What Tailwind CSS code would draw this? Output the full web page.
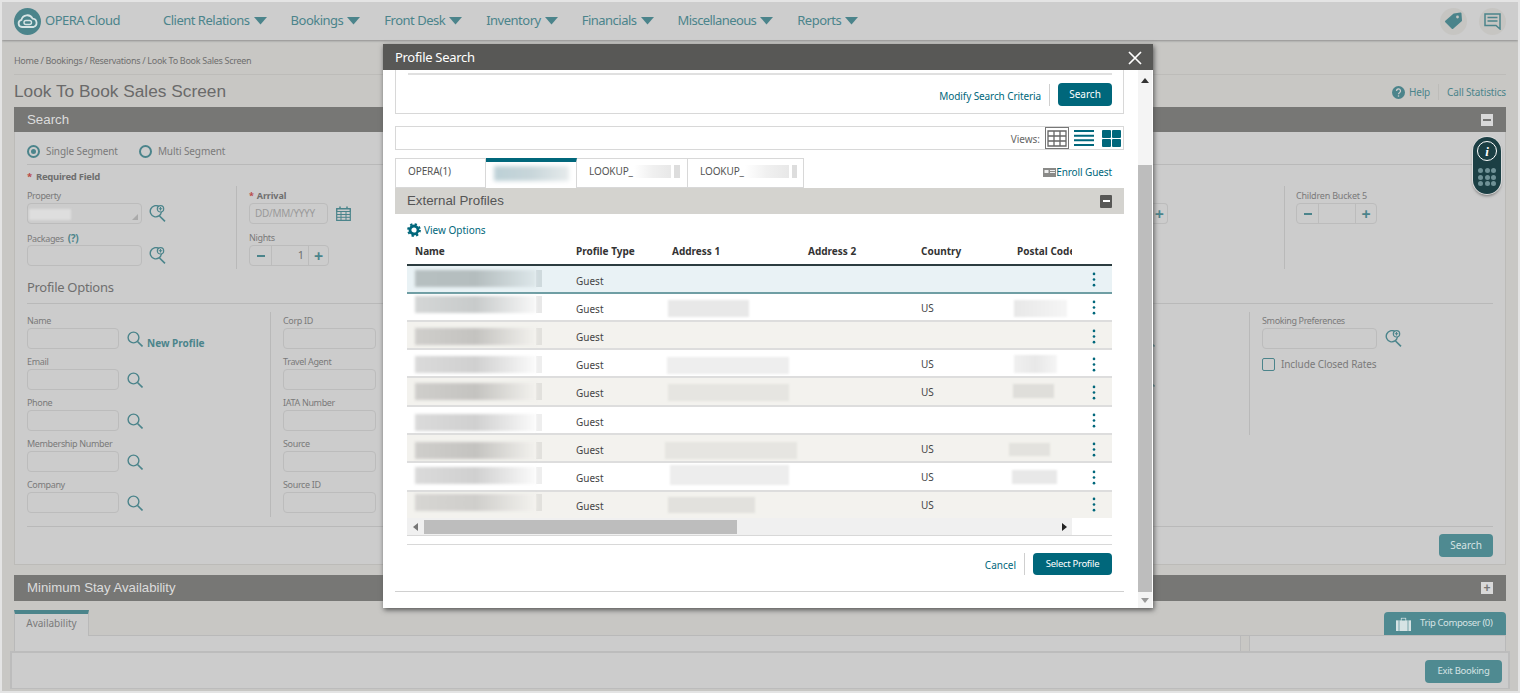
<!DOCTYPE html>
<html lang="en">
<head>
<meta charset="utf-8">
<title>Look To Book Sales Screen</title>
<script src="https://cdn.jsdelivr.net/npm/@tailwindcss/browser@4"></script>
</head>
<body class="bg-[#e6e6e6]">
<svg class="hidden" aria-hidden="true">
  <symbol id="mag" viewBox="0 0 16 16"><circle cx="6.5" cy="6.5" r="5.4" fill="none" stroke="currentColor" stroke-width="1.4"/><path d="M10.5 10.5L15.5 15.5" stroke="currentColor" stroke-width="1.6"/></symbol>
  <symbol id="magplus" viewBox="0 0 17 17"><path d="M10 1.6A5.6 5.6 0 1 0 12.4 7" fill="none" stroke="currentColor" stroke-width="1.4"/><circle cx="11.5" cy="3.8" r="3.2" fill="none" stroke="currentColor" stroke-width="1.2"/><path d="M11.5 2v3.6M9.7 3.8h3.6" stroke="currentColor" stroke-width="1.1"/><path d="M10.5 11L16 16.4" stroke="currentColor" stroke-width="1.6"/></symbol>
  <symbol id="kebab" viewBox="0 0 4 16"><circle cx="2" cy="2" r="1.4" fill="currentColor"/><circle cx="2" cy="8" r="1.4" fill="currentColor"/><circle cx="2" cy="14" r="1.4" fill="currentColor"/></symbol>
  <symbol id="caret" viewBox="0 0 13 8"><path d="M0 0H13L6.5 7.5Z" fill="currentColor"/></symbol>
</svg>

<div class="relative w-[1520px] h-[693px] overflow-hidden border-2 border-[#e4e4e4] bg-[#c8c7c4] font-['Noto_Sans'] text-[#7a7a7a]">

  <!-- top navigation -->
  <header class="flex items-center h-[38px] pl-[12px] pr-[12px] bg-[#cdcdcd] shadow-[0_1px_2px_#8f8f8f] text-[#4b848b] text-[13px] tracking-[-0.5px]">
    <svg class="w-[27px] h-[27px]" viewBox="0 0 27 27"><circle cx="13.5" cy="13.5" r="13.5" fill="#4b848b"/><path d="M8 19a3.6 3.6 0 0 1-.6-7.1A6 6 0 0 1 18.6 10.6 4.3 4.3 0 0 1 19.5 19Z" fill="none" stroke="#d8e4e5" stroke-width="1.8"/><rect x="10" y="12.5" width="7.5" height="4" rx="2" fill="none" stroke="#d8e4e5" stroke-width="1.4"/></svg>
    <span class="ml-[4px] w-[118px]">OPERA Cloud</span>
    <nav class="flex items-center gap-[24px]">
      <a class="flex items-center gap-[4px]">Client Relations<svg class="w-[13px] h-[8px]"><use href="#caret"/></svg></a>
      <a class="flex items-center gap-[4px]">Bookings<svg class="w-[13px] h-[8px]"><use href="#caret"/></svg></a>
      <a class="flex items-center gap-[4px]">Front Desk<svg class="w-[13px] h-[8px]"><use href="#caret"/></svg></a>
      <a class="flex items-center gap-[4px]">Inventory<svg class="w-[13px] h-[8px]"><use href="#caret"/></svg></a>
      <a class="flex items-center gap-[4px]">Financials<svg class="w-[13px] h-[8px]"><use href="#caret"/></svg></a>
      <a class="flex items-center gap-[4px] tracking-[-0.6px]">Miscellaneous<svg class="w-[13px] h-[8px]"><use href="#caret"/></svg></a>
      <a class="flex items-center gap-[4px]">Reports<svg class="w-[13px] h-[8px]"><use href="#caret"/></svg></a>
    </nav>
    <div class="ml-auto flex items-center gap-[12px]">
      <span class="flex items-center justify-center w-[27px] h-[27px] rounded-full bg-[#c6c5c2]">
        <svg class="w-[19px] h-[18px]" viewBox="0 0 19 18"><path d="M10 2.500L16.500 1.500L17 8.500L8.500 16L2 9.500Z" fill="#4b848b" stroke="#4b848b" stroke-width="2" stroke-linejoin="round"/><circle cx="13.500" cy="5" r="1.400" fill="#c6c5c2"/></svg>
      </span>
      <span class="flex items-center justify-center w-[27px] h-[27px] rounded-full bg-[#c6c5c2]">
        <svg class="w-[17px] h-[17px]" viewBox="0 0 17 17"><path d="M1 1H16V16L12 12.500H1Z" fill="none" stroke="#4b848b" stroke-width="1.500"/><path d="M3.500 4.600H13.500M3.500 8H13.500" stroke="#4b848b" stroke-width="1.500"/></svg>
      </span>
    </div>
  </header>

  <main class="px-[12px]">
    <div class="h-[35px] pt-[14px] border-b border-[#bdbcb9] text-[9px] tracking-[-0.3px] leading-[13px] text-[#6f6f6f]">Home / Bookings / Reservations / Look To Book Sales Screen</div>
    <div class="flex items-center justify-between h-[32px]">
      <h1 class="font-['Liberation_Sans'] text-[17.3px] pt-[2px] text-[#6a6a6a]">Look To Book Sales Screen</h1>
      <div class="flex items-center text-[10px] tracking-[-0.15px] text-[#4b848b] pt-[2px]">
        <svg class="w-[13px] h-[13px]" viewBox="0 0 13 13"><circle cx="6.5" cy="6.5" r="6.5" fill="#4b848b"/><path d="M4.5 5a2 2 0 1 1 3 1.7c-.7.4-1 .8-1 1.5" fill="none" stroke="#ccc" stroke-width="1.3"/><circle cx="6.5" cy="10" r=".8" fill="#ccc"/></svg>
        <span class="ml-[4px] mr-[8px]">Help</span>
        <span class="h-[16px] border-l border-[#bdbcb9] mr-[8px]"></span>
        <span>Call Statistics</span>
      </div>
    </div>

    <!-- search panel -->
    <section>
      <div class="flex items-center justify-between h-[25px] bg-[#777775] pl-[13px] pr-[13px] font-['Liberation_Sans'] text-[13.3px] text-[#dcdcdc]">
        <span>Search</span>
        <span class="flex items-center justify-center w-[12px] h-[12px] bg-[#d9d9d9]"><span class="w-[8px] h-[2px] bg-[#777775]"></span></span>
      </div>
      <div class="h-[433px] border border-t-0 border-[#bcbbb8] bg-[#cccccc] px-[12px]">
        <div class="flex items-center h-[33px] pt-[6px] border-b border-[#b9b9b9] text-[10px] tracking-[-0.1px]">
          <span class="flex items-center justify-center w-[13px] h-[13px] rounded-full border-2 border-[#4b848b]"><span class="w-[5px] h-[5px] rounded-full bg-[#4b848b]"></span></span>
          <span class="ml-[6px]">Single Segment</span>
          <span class="ml-[21px] w-[13px] h-[13px] rounded-full border-2 border-[#4b848b]"></span>
          <span class="ml-[6px]">Multi Segment</span>
        </div>
        <div class="h-[21px] pt-[5px] text-[9.5px] tracking-[-0.25px] leading-[14px] font-bold text-[#6f6f6f]"><span class="text-[#b94a48] mr-[4px]">*</span>Required Field</div>

        <div class="flex h-[83px]">
          <div class="w-[209px]">
            <div class="h-[17px] pt-[3px] text-[9px] tracking-[-0.35px] leading-[14px]">Property</div>
            <div class="flex items-center">
              <div class="relative w-[115px] h-[21px] rounded-[4px] border border-[#bcbcbc]">
                <span class="absolute left-[1px] top-[5px] w-[42px] h-[11px] bg-[#dedede] blur-[1px]"></span>
                <span class="absolute right-[3px] bottom-[3px] w-0 h-0 border-l-[6px] border-b-[6px] border-l-transparent border-b-[#aaaaaa]"></span>
              </div>
              <svg class="ml-[7px] w-[17px] h-[17px] text-[#4b848b]"><use href="#magplus"/></svg>
            </div>
            <div class="h-[21px] pt-[7px] text-[9px] tracking-[-0.35px] leading-[14px]">Packages <b class="ml-[2px] text-[10px] text-[#4b848b]">(?)</b></div>
            <div class="flex items-center">
              <div class="w-[115px] h-[21px] rounded-[4px] border border-[#bcbcbc]"></div>
              <svg class="ml-[7px] w-[17px] h-[17px] text-[#4b848b]"><use href="#magplus"/></svg>
            </div>
          </div>
          <div class="w-[200px] border-l border-[#b9b9b9] pl-[12px]">
            <div class="h-[17px] pt-[3px] text-[9px] tracking-[-0.1px] leading-[14px] font-bold text-[#6f6f6f]"><span class="text-[#b94a48] mr-[3px]">*</span>Arrival</div>
            <div class="flex items-center">
              <div class="flex items-center w-[79px] h-[21px] rounded-[4px] border border-[#bcbcbc] pl-[5px] text-[10px] tracking-[-0.3px] text-[#9a9a9a]">DD/MM/YYYY</div>
              <svg class="ml-[8px] w-[15px] h-[15px]" viewBox="0 0 15 15"><path d="M.7 2.5H14.3V14.3H.7Z" fill="none" stroke="#4b848b" stroke-width="1.2"/><path d="M.7 3H14.3V5.5H.7ZM5 5.5V14M10 5.5V14M1 8.5H14M1 11.3H14" fill="none" stroke="#4b848b"/><path d="M4 .5V3M11 .5V3" stroke="#4b848b" stroke-width="1.5"/></svg>
            </div>
            <div class="h-[21px] pt-[7px] text-[9px] tracking-[-0.35px] leading-[14px]">Nights</div>
            <div class="flex w-[80px] h-[21px] rounded-[4px] border border-[#bcbcbc] text-[#4b848b] text-[11px]">
              <span class="flex items-center justify-center w-[22px] border-r border-[#bcbcbc]"><span class="w-[8px] h-[2px] bg-[#4b848b]"></span></span>
              <span class="flex items-center justify-end w-[36px] pr-[4px] text-[#6f6f6f]">1</span>
              <span class="flex items-center justify-center flex-1 border-l border-[#bcbcbc] text-[16px] font-bold leading-none">+</span>
            </div>
          </div>
          <div class="flex-1 flex justify-end pt-[17px] pr-[116px]">
            <span class="flex items-center justify-end w-[30px] h-[21px] rounded-r-[4px] border border-l-0 border-[#bcbcbc] pr-[3px] text-[16px] font-bold leading-none text-[#4b848b]">+</span>
          </div>
          <div class="w-[209px] border-l border-[#b9b9b9] pl-[11px]">
            <div class="h-[17px] pt-[3px] text-[9px] tracking-[-0.2px] leading-[14px]">Children Bucket 5</div>
            <div class="flex w-[81px] h-[21px] rounded-[4px] border border-[#bcbcbc]">
              <span class="flex items-center justify-center w-[22px] border-r border-[#bcbcbc]"><span class="w-[8px] h-[2px] bg-[#4b848b]"></span></span>
              <span class="w-[36px]"></span>
              <span class="flex items-center justify-center flex-1 border-l border-[#bcbcbc] text-[16px] font-bold leading-none text-[#4b848b]">+</span>
            </div>
          </div>
        </div>

        <div class="h-[35px] pt-[9px] border-b border-[#b9b9b9] text-[13px] tracking-[-0.3px] leading-[19px] text-[#6f6f6f]">Profile Options</div>

        <div class="flex mt-[8px] h-[205px] text-[9px] tracking-[-0.35px] leading-[14px]">
          <div class="w-[243px] shrink-0">
            <div class="h-[37px] flex flex-col justify-end">
              <div>Name</div>
              <div class="flex items-end h-[21px]"><div class="w-[92px] h-[21px] rounded-[4px] border border-[#bcbcbc]"></div><svg class="ml-[8px] mb-[2px] w-[16px] h-[16px] text-[#4b848b]"><use href="#mag"/></svg><b class="ml-[4px] text-[10px] tracking-normal leading-[12px] text-[#4b848b]">New Profile</b></div>
            </div>
            <div class="h-[41px] flex flex-col justify-end">
              <div>Email</div>
              <div class="flex items-center h-[21px]"><div class="w-[92px] h-[21px] rounded-[4px] border border-[#bcbcbc]"></div><svg class="ml-[8px] w-[16px] h-[16px] text-[#4b848b]"><use href="#mag"/></svg></div>
            </div>
            <div class="h-[41px] flex flex-col justify-end">
              <div>Phone</div>
              <div class="flex items-center h-[21px]"><div class="w-[92px] h-[21px] rounded-[4px] border border-[#bcbcbc]"></div><svg class="ml-[8px] w-[16px] h-[16px] text-[#4b848b]"><use href="#mag"/></svg></div>
            </div>
            <div class="h-[41px] flex flex-col justify-end">
              <div>Membership Number</div>
              <div class="flex items-center h-[21px]"><div class="w-[92px] h-[21px] rounded-[4px] border border-[#bcbcbc]"></div><svg class="ml-[8px] w-[16px] h-[16px] text-[#4b848b]"><use href="#mag"/></svg></div>
            </div>
            <div class="h-[41px] flex flex-col justify-end">
              <div>Company</div>
              <div class="flex items-center h-[21px]"><div class="w-[92px] h-[21px] rounded-[4px] border border-[#bcbcbc]"></div><svg class="ml-[8px] w-[16px] h-[16px] text-[#4b848b]"><use href="#mag"/></svg></div>
            </div>
          </div>
          <div class="w-[200px] shrink-0 border-l border-[#b9b9b9] pl-[12px]">
            <div class="h-[37px] flex flex-col justify-end"><div>Corp ID</div><div class="w-[93px] h-[21px] rounded-[4px] border border-[#bcbcbc]"></div></div>
            <div class="h-[41px] flex flex-col justify-end"><div>Travel Agent</div><div class="w-[93px] h-[21px] rounded-[4px] border border-[#bcbcbc]"></div></div>
            <div class="h-[41px] flex flex-col justify-end"><div>IATA Number</div><div class="w-[93px] h-[21px] rounded-[4px] border border-[#bcbcbc]"></div></div>
            <div class="h-[41px] flex flex-col justify-end"><div>Source</div><div class="w-[93px] h-[21px] rounded-[4px] border border-[#bcbcbc]"></div></div>
            <div class="h-[41px] flex flex-col justify-end"><div>Source ID</div><div class="w-[93px] h-[21px] rounded-[4px] border border-[#bcbcbc]"></div></div>
          </div>
          <div class="flex-1 flex flex-col items-end pt-[16px] pr-[94px] text-[#4b848b]">
            <svg class="mt-[3px] w-[16px] h-[16px]"><use href="#mag"/></svg>
            <svg class="mt-[24px] w-[16px] h-[16px]"><use href="#mag"/></svg>
          </div>
          <div class="w-[244px] shrink-0 h-[123px] border-l border-[#b9b9b9] pl-[12px]">
            <div class="h-[37px] flex flex-col justify-end">
              <div>Smoking Preferences</div>
              <div class="flex items-center h-[21px]"><div class="w-[115px] h-[21px] rounded-[4px] border border-[#bcbcbc]"></div><svg class="ml-[8px] w-[17px] h-[17px] text-[#4b848b]"><use href="#magplus"/></svg></div>
            </div>
            <div class="flex items-center mt-[8px] text-[10px] tracking-[-0.1px]"><span class="w-[13px] h-[13px] rounded-[2px] border-[1.5px] border-[#4b848b]"></span><span class="ml-[6px]">Include Closed Rates</span></div>
          </div>
        </div>

        <div class="h-[10px] border-b border-[#b9b9b9]"></div>
        <div class="flex justify-end mt-[7px]">
          <button class="w-[54px] h-[23px] rounded-[4px] bg-[#4f8a91] text-[10px] text-[#d6e3e4]">Search</button>
        </div>
      </div>
    </section>

    <!-- minimum stay -->
    <div class="flex items-center justify-between mt-[10px] h-[26px] bg-[#777775] pl-[13px] pr-[13px] font-['Liberation_Sans'] text-[13.2px] text-[#dcdcdc]">
      <span>Minimum Stay Availability</span>
      <span class="flex items-center justify-center w-[12px] h-[12px] bg-[#d9d9d9] text-[#777775] text-[12px] leading-none font-bold">+</span>
    </div>
    <div class="flex items-end justify-between h-[35px] border-b border-[#b9b9b9]">
      <div class="flex items-center justify-center w-[75px] h-[26px] pb-[3px] -mb-[1px] border-t-4 border-r border-l border-t-[#4b848b] border-x-[#b9b9b9] bg-[#cccccc] text-[10px]">Availability</div>
      <div class="flex items-center w-[122px] h-[23px] rounded-t-[4px] bg-[#4f8a91] pl-[12px] text-[9.5px] tracking-[-0.4px] text-[#d6e3e4]">
        <svg class="w-[15px] h-[14px] mr-[9px]" viewBox="0 0 15 14"><path d="M0 3.5H2.5V14H0ZM3.5 3.5H11.500V14H3.500ZM12.500 3.500H15V14H12.500ZM5 3.500V1H10V3.500" fill="#d6e3e4" stroke="#d6e3e4" stroke-width=".3"/><path d="M5.600 3.500V1.600H9.400V3.500" fill="#4f8a91"/></svg>
        Trip Composer (0)
      </div>
    </div>
    <div class="flex h-[30px]">
      <div class="w-[1227px] bg-[#cccccc] border-x border-[#b9b9b9]"></div>
      <div class="ml-[8px] flex-1 bg-[#cccccc] border-x border-[#b9b9b9]"></div>
    </div>
  </main>

  <!-- sticky footer -->
  <footer class="absolute left-[8px] right-[8px] bottom-[2px] flex items-center justify-end h-[38px] pt-[2px] pr-[6px] bg-[#cccccc] border-2 border-b-[1px] border-[#bcbcbc]">
    <button class="w-[77px] h-[23px] rounded-[4px] bg-[#4f8a91] text-[9.5px] tracking-[-0.3px] text-[#d6e3e4]">Exit Booking</button>
  </footer>

  <!-- floating pill -->
  <div class="absolute left-[1471px] top-[135px] flex flex-col items-center w-[28px] h-[57px] pt-[4px] rounded-full bg-[#1b3f44] shadow-[0_0_0_1px_#dcdcdc,0_2px_3px_#777]">
    <span class="flex items-center justify-center w-[20px] h-[20px] rounded-full border-[1.5px] border-white font-['Liberation_Serif'] italic font-bold text-[13px] leading-none text-white">i</span>
    <div class="grid grid-cols-3 gap-[1.500px] mt-[7px]">
      <span class="w-[5px] h-[5px] rounded-full bg-[#6f9196]"></span><span class="w-[5px] h-[5px] rounded-full bg-[#6f9196]"></span><span class="w-[5px] h-[5px] rounded-full bg-[#6f9196]"></span>
      <span class="w-[5px] h-[5px] rounded-full bg-[#6f9196]"></span><span class="w-[5px] h-[5px] rounded-full bg-[#6f9196]"></span><span class="w-[5px] h-[5px] rounded-full bg-[#6f9196]"></span>
      <span class="w-[5px] h-[5px] rounded-full bg-[#6f9196]"></span><span class="w-[5px] h-[5px] rounded-full bg-[#6f9196]"></span><span class="w-[5px] h-[5px] rounded-full bg-[#6f9196]"></span>
    </div>
  </div>

  <!-- modal -->
  <div role="dialog" class="absolute left-[381px] top-[42px] flex flex-col w-[770px] h-[564px] bg-white shadow-[1px_2px_5px_#555]">
    <div class="flex items-center justify-between h-[26px] bg-[#585856] pl-[12px] pr-[11px] pt-[2px] text-[13px] tracking-[-0.3px] text-white shrink-0">
      <span>Profile Search</span>
      <svg class="w-[14px] h-[14px]" viewBox="0 0 14 14"><path d="M1 1L13 13M13 1L1 13" stroke="#fff" stroke-width="1.700"/></svg>
    </div>
    <div class="flex flex-1 min-h-0">
      <div class="w-[755px] pl-[12px] pr-[14px] text-[#444]">
        <!-- criteria box -->
        <div class="h-[44px] border-x border-b border-[#d8d8d8] pl-[12px] pr-[11px] pt-[3px]">
          <div class="border-t-2 border-[#e0e0e0]"></div>
          <div class="flex items-center justify-end mt-[8px] text-[#00677b]">
            <span class="text-[10px] tracking-[-0.1px] pt-[3px]">Modify Search Criteria</span>
            <span class="h-[22px] ml-[8px] mr-[8px] border-l border-[#cfcfcf]"></span>
            <button class="w-[54px] h-[23px] rounded-[4px] bg-[#00677b] text-[10px] text-white">Search</button>
          </div>
        </div>
        <!-- views -->
        <div class="flex items-center justify-end h-[24px] mt-[12px] border border-[#d8d8d8] pr-[2px] text-[10px] text-[#666]">
          <span class="pt-[3px]">Views:</span>
          <span class="ml-[5px] flex items-center justify-center w-[24px] h-[22px] border border-[#777]">
            <svg class="w-[20px] h-[17px]" viewBox="0 0 20 17"><path d="M1 1H19V16H1ZM1 6H19M1 11H19M7 1V16M13 1V16" fill="none" stroke="#666" stroke-width="1.300"/></svg>
          </span>
          <svg class="ml-[5px] w-[20px] h-[16px]" viewBox="0 0 20 16"><path d="M0 1H20M0 5.700H20M0 10.300H20M0 15H20" stroke="#00677b" stroke-width="2"/></svg>
          <svg class="ml-[8px] w-[19px] h-[17px]" viewBox="0 0 19 17"><rect width="9" height="8" rx="1" fill="#00677b"/><rect x="10" width="9" height="8" rx="1" fill="#00677b"/><rect y="9" width="9" height="8" rx="1" fill="#00677b"/><rect x="10" y="9" width="9" height="8" rx="1" fill="#00677b"/></svg>
        </div>
        <!-- tabs -->
        <div class="flex items-end justify-between h-[30px] mt-[8px] text-[10px] tracking-[-0.1px] text-[#555]">
          <div class="flex h-[30px]">
            <div class="flex items-center w-[91px] pl-[12px] pb-[4px] border border-[#d8d8d8]">OPERA(1)</div>
            <div class="relative flex items-center w-[91px] border-r border-b-0 border-t-4 border-t-[#00677b] border-r-[#d8d8d8] pl-[8px] pb-[4px]"><span class="w-[75px] h-[15px] bg-linear-to-r from-[#bcd0d6] via-[#c8d6da] to-[#e6ebec] blur-[2px]"></span></div>
            <div class="flex items-center w-[111px] pl-[12px] pb-[4px] border-y border-r border-[#d8d8d8]">LOOKUP_<span class="ml-[1px] w-[37px] h-[13px] bg-linear-to-r from-[#ffffff] via-[#f0f0f0] to-[#e8e8e8]"></span><span class="ml-[3px] w-[6px] h-[13px] bg-[#dddddd]"></span></div>
            <div class="flex items-center w-[116px] pl-[12px] pb-[4px] border-y border-r border-[#d8d8d8]">LOOKUP_<span class="ml-[1px] w-[44px] h-[13px] bg-linear-to-r from-[#ffffff] via-[#f0f0f0] to-[#e8e8e8]"></span><span class="ml-[3px] w-[5px] h-[13px] bg-[#dddddd]"></span></div>
          </div>
          <div class="flex items-center h-[30px] pr-[12px] pb-[2px] text-[10px] text-[#00677b]">
            <svg class="w-[13px] h-[9px]" viewBox="0 0 13 9"><rect width="13" height="9" fill="#8a8a88"/><rect x="1.500" y="2" width="4" height="3" fill="#eee"/><path d="M7 2.500H12M7 4.500H12" stroke="#eee"/></svg>
            <span>Enroll Guest</span>
          </div>
        </div>
        <!-- external profiles -->
        <div class="flex items-center justify-between h-[26px] bg-[#d4d3cf] pl-[12px] pr-[12px] font-['Liberation_Sans'] text-[13.3px] text-[#555]">
          <span class="pb-[1px]">External Profiles</span>
          <span class="flex items-center justify-center w-[12px] h-[13px] bg-[#585856] rounded-[1px]"><span class="w-[7px] h-[2px] bg-white"></span></span>
        </div>

        <div class="px-[12px]">
          <div class="flex items-center h-[29px] pt-[3px] text-[10px] text-[#00677b]">
            <svg class="w-[14px] h-[14px]" viewBox="0 0 14 14"><circle cx="7" cy="7" r="4" fill="none" stroke="#00677b" stroke-width="2.800"/><circle cx="7" cy="7" r="5.900" fill="none" stroke="#00677b" stroke-width="2" stroke-dasharray="2.300 2.330"/></svg>
            <span class="ml-[3px]">View Options</span>
          </div>

          <!-- table -->
          <div class="grid grid-cols-[161px_96px_136px_113px_96px_63px_40px] items-center h-[16px] pb-[5px] box-content border-b-2 border-[#2c3c40] text-[10px] font-bold text-[#333]">
            <span class="pl-[8px]">Name</span><span class="pl-[8px]">Profile Type</span><span class="pl-[8px]">Address 1</span><span class="pl-[8px]">Address 2</span><span class="pl-[8px]">Country</span><span class="pl-[8px] whitespace-nowrap overflow-hidden">Postal Code</span><span></span>
          </div>

          <div class="grid grid-cols-[161px_96px_136px_113px_96px_63px_40px] h-[28px] bg-[#e9f2f5] border-b-2 border-[#6f9ea4] text-[10px]">
            <div class="pl-[8px] pt-[4px]"><div class="flex w-[127px] h-[17px]"><span class="w-[121px] bg-linear-to-r from-[#b6bfc0] via-[#b4bdbe] to-[#dde7ea] blur-[1.500px]"></span><span class="w-[6px] bg-[#cfdadd]"></span></div></div>
            <span class="pl-[8px] pt-[8px]">Guest</span><span></span><span></span><span></span><span></span>
            <span class="flex justify-center pl-[4px] pt-[6px] text-[#00677b]"><svg class="w-[4px] h-[15px]"><use href="#kebab"/></svg></span>
          </div>
          <div class="grid grid-cols-[161px_96px_136px_113px_96px_63px_40px] h-[28px] bg-white border-b-2 border-[#dddddd] text-[10px]">
            <div class="pl-[8px] pt-[2px]"><div class="flex w-[127px] h-[17px]"><span class="w-[121px] bg-linear-to-r from-[#d4d6d6] via-[#c8cbcb] to-[#f8f8f8] blur-[1.500px]"></span><span class="w-[6px] bg-[#e8e8e8]"></span></div></div>
            <span class="pl-[8px] pt-[8px]">Guest</span>
            <div class="pl-[4px] pt-[6px]"><div class="w-[81px] h-[17px] bg-[#e8e8e8] blur-[1px]"></div></div><span></span>
            <span class="pl-[8px] pt-[7px]">US</span>
            <div class="pl-[5px] pt-[6px]"><div class="w-[53px] h-[17px] bg-linear-to-r from-[#e8e8e8] to-[#f5f5f5] blur-[1px]"></div></div>
            <span class="flex justify-center pl-[4px] pt-[6px] text-[#00677b]"><svg class="w-[4px] h-[15px]"><use href="#kebab"/></svg></span>
          </div>
          <div class="grid grid-cols-[161px_96px_136px_113px_96px_63px_40px] h-[28px] bg-[#f3f2ee] border-b-2 border-[#dddddd] text-[10px]">
            <div class="pl-[8px] pt-[6px]"><div class="flex w-[127px] h-[17px]"><span class="w-[121px] bg-linear-to-r from-[#cfcecb] via-[#c4c3c0] to-[#f3f2ee] blur-[1.500px]"></span><span class="w-[6px] bg-[#e2e1dd]"></span></div></div>
            <span class="pl-[8px] pt-[8px]">Guest</span><span></span><span></span><span></span><span></span>
            <span class="flex justify-center pl-[4px] pt-[7px] text-[#00677b]"><svg class="w-[4px] h-[15px]"><use href="#kebab"/></svg></span>
          </div>
          <div class="grid grid-cols-[161px_96px_136px_113px_96px_63px_40px] h-[28px] bg-white border-b-2 border-[#dddddd] text-[10px]">
            <div class="pl-[8px] pt-[6px]"><div class="flex w-[127px] h-[17px]"><span class="w-[121px] bg-linear-to-r from-[#dadada] via-[#d0d0d0] to-[#fbfbfb] blur-[1.500px]"></span><span class="w-[6px] bg-[#eeeeee]"></span></div></div>
            <span class="pl-[8px] pt-[8px]">Guest</span>
            <div class="pl-[3px] pt-[7px]"><div class="w-[122px] h-[17px] bg-[#eeeeee] blur-[1px]"></div></div><span></span>
            <span class="pl-[8px] pt-[7px]">US</span>
            <div class="pl-[5px] pt-[5px]"><div class="w-[43px] h-[18px] bg-linear-to-r from-[#f0f0f0] via-[#e8e8e8] to-[#f5f5f5] blur-[1px]"></div></div>
            <span class="flex justify-center pl-[4px] pt-[7px] text-[#00677b]"><svg class="w-[4px] h-[15px]"><use href="#kebab"/></svg></span>
          </div>
          <div class="grid grid-cols-[161px_96px_136px_113px_96px_63px_40px] h-[29px] bg-[#f3f2ee] border-b-2 border-[#dddddd] text-[10px]">
            <div class="pl-[8px] pt-[5px]"><div class="flex w-[127px] h-[17px]"><span class="w-[121px] bg-linear-to-r from-[#cfcecb] via-[#c4c3c0] to-[#f3f2ee] blur-[1.500px]"></span><span class="w-[6px] bg-[#e2e1dd]"></span></div></div>
            <span class="pl-[8px] pt-[8px]">Guest</span>
            <div class="pl-[4px] pt-[6px]"><div class="w-[121px] h-[17px] bg-[#e6e5e1] blur-[1px]"></div></div><span></span>
            <span class="pl-[8px] pt-[7px]">US</span>
            <div class="pl-[4px] pt-[6px]"><div class="w-[41px] h-[14px] bg-[#dfdeda] blur-[1px]"></div></div>
            <span class="flex justify-center pl-[4px] pt-[7px] text-[#00677b]"><svg class="w-[4px] h-[15px]"><use href="#kebab"/></svg></span>
          </div>
          <div class="grid grid-cols-[161px_96px_136px_113px_96px_63px_40px] h-[28px] bg-white border-b-2 border-[#dddddd] text-[10px]">
            <div class="pl-[8px] pt-[7px]"><div class="flex w-[127px] h-[17px]"><span class="w-[121px] bg-linear-to-r from-[#dadada] via-[#d0d0d0] to-[#fbfbfb] blur-[1.500px]"></span><span class="w-[6px] bg-[#eeeeee]"></span></div></div>
            <span class="pl-[8px] pt-[8px]">Guest</span><span></span><span></span><span></span><span></span>
            <span class="flex justify-center pl-[4px] pt-[6px] text-[#00677b]"><svg class="w-[4px] h-[15px]"><use href="#kebab"/></svg></span>
          </div>
          <div class="grid grid-cols-[161px_96px_136px_113px_96px_63px_40px] h-[28px] bg-[#f3f2ee] border-b-2 border-[#dddddd] text-[10px]">
            <div class="pl-[8px] pt-[7px]"><div class="flex w-[127px] h-[17px]"><span class="w-[121px] bg-linear-to-r from-[#cfcecb] via-[#c4c3c0] to-[#f3f2ee] blur-[1.500px]"></span><span class="w-[6px] bg-[#e2e1dd]"></span></div></div>
            <span class="pl-[8px] pt-[8px]">Guest</span>
            <div class="pl-[1px] pt-[7px]"><div class="w-[132px] h-[17px] bg-[#e6e5e1] blur-[1px]"></div></div><span></span>
            <span class="pl-[8px] pt-[7px]">US</span>
            <div class="pt-[8px]"><div class="w-[41px] h-[13px] bg-[#e3e2de] blur-[1px]"></div></div>
            <span class="flex justify-center pl-[4px] pt-[7px] text-[#00677b]"><svg class="w-[4px] h-[15px]"><use href="#kebab"/></svg></span>
          </div>
          <div class="grid grid-cols-[161px_96px_136px_113px_96px_63px_40px] h-[29px] bg-white border-b-2 border-[#dddddd] text-[10px]">
            <div class="pl-[8px] pt-[4px]"><div class="flex w-[127px] h-[17px]"><span class="w-[121px] bg-linear-to-r from-[#dadada] via-[#d0d0d0] to-[#fbfbfb] blur-[1.500px]"></span><span class="w-[6px] bg-[#eeeeee]"></span></div></div>
            <span class="pl-[8px] pt-[8px]">Guest</span>
            <div class="pl-[6px] pt-[2px]"><div class="w-[119px] h-[20px] bg-[#ededed] blur-[1px]"></div></div><span></span>
            <span class="pl-[8px] pt-[7px]">US</span>
            <div class="pl-[3px] pt-[7px]"><div class="w-[45px] h-[14px] bg-[#e8e8e8] blur-[1px]"></div></div>
            <span class="flex justify-center pl-[4px] pt-[7px] text-[#00677b]"><svg class="w-[4px] h-[15px]"><use href="#kebab"/></svg></span>
          </div>
          <div class="grid grid-cols-[161px_96px_136px_113px_96px_63px_40px] h-[26px] bg-[#f3f2ee] text-[10px]">
            <div class="pl-[8px] pt-[2px]"><div class="flex w-[127px] h-[17px]"><span class="w-[121px] bg-linear-to-r from-[#d6d5d2] via-[#cfcecb] to-[#f3f2ee] blur-[1.500px]"></span><span class="w-[6px] bg-[#e2e1dd]"></span></div></div>
            <span class="pl-[8px] pt-[7px]">Guest</span>
            <div class="pl-[4px] pt-[5px]"><div class="w-[87px] h-[16px] bg-[#e2e1dd] blur-[1px]"></div></div><span></span>
            <span class="pl-[8px] pt-[6px]">US</span><span></span>
            <span class="flex justify-center pl-[4px] pt-[5px] text-[#00677b]"><svg class="w-[4px] h-[15px]"><use href="#kebab"/></svg></span>
          </div>

          <!-- horizontal scrollbar -->
          <div class="flex items-center h-[18px] border-b border-[#d8d8d8]">
            <div class="flex items-center w-[665px] h-[17px] bg-[#f0f0f0]">
              <span class="ml-[6px] w-0 h-0 border-y-[4px] border-r-[5px] border-y-transparent border-r-[#777]"></span>
              <span class="ml-[6px] w-[313px] h-[14px] bg-[#bdbdbd]"></span>
              <span class="ml-auto mr-[5px] w-0 h-0 border-y-[4px] border-l-[5px] border-y-transparent border-l-[#222]"></span>
            </div>
          </div>
          <div class="mt-[8px] border-t border-[#d8d8d8]"></div>

          <div class="flex items-center justify-end h-[22px] mt-[8px] text-[10px] text-[#00677b]">
            <span class="pt-[3px]">Cancel</span>
            <span class="h-[22px] ml-[8px] mr-[8px] border-l border-[#cfcfcf]"></span>
            <button class="w-[79px] h-[22px] rounded-[4px] bg-[#00677b] text-[9.5px] tracking-[-0.3px] text-white">Select Profile</button>
          </div>
        </div>
        <div class="mt-[16px] border-t border-[#d0d0d0]"></div>
      </div>
      <!-- vertical scrollbar -->
      <div class="flex flex-col items-center w-[14px] bg-[#f4f4f4]">
        <div class="flex justify-center h-[95px] w-full pt-[8px]"><span class="w-0 h-0 border-x-[4px] border-b-[5px] border-x-transparent border-b-[#333]"></span></div>
        <div class="w-full flex-1 bg-[#bdbdbd]"></div>
        <div class="flex items-center justify-center h-[16px] w-full"><span class="w-0 h-0 border-x-[4px] border-t-[5px] border-x-transparent border-t-[#999]"></span></div>
      </div>
      <div class="w-px"></div>
    </div>
  </div>
</div>
</body>
</html>
